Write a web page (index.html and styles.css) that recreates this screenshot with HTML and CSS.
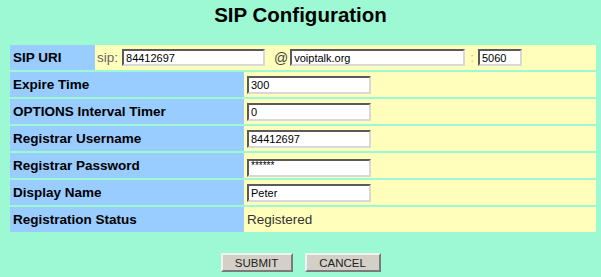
FILE: index.html
```html
<!DOCTYPE html>
<html lang="en">
<head>
    <meta charset="UTF-8">
    <title>SIP Configuration</title>
    <link rel="stylesheet" href="styles.css">
</head>
<body>
    <h1 class="title">SIP Configuration</h1>

    <form class="config" onsubmit="return false;">
        <table class="grid">
            <tr>
                <td colspan="2" class="uri-cell">
                    <div class="uri-row">
                        <span class="uri-label">SIP URI</span>
                        <div class="uri-value">
                            <span class="prefix">sip:</span>
                            <input class="field small uri-user" type="text" value="84412697">
                            <span class="at">@</span>
                            <input class="field small uri-host" type="text" value="voiptalk.org">
                            <span class="colon">:</span>
                            <input class="field small uri-port" type="text" value="5060">
                        </div>
                    </div>
                </td>
            </tr>
            <tr>
                <th>Expire Time</th>
                <td><input class="field" type="text" value="300"></td>
            </tr>
            <tr>
                <th>OPTIONS Interval Timer</th>
                <td><input class="field" type="text" value="0"></td>
            </tr>
            <tr>
                <th>Registrar Username</th>
                <td><input class="field" type="text" value="84412697"></td>
            </tr>
            <tr>
                <th>Registrar Password</th>
                <td><input class="field pw" type="text" value="******"></td>
            </tr>
            <tr>
                <th>Display Name</th>
                <td><input class="field" type="text" value="Peter"></td>
            </tr>
            <tr>
                <th>Registration Status</th>
                <td class="status">Registered</td>
            </tr>
        </table>

        <div class="actions">
            <button type="submit" class="btn">SUBMIT</button>
            <button type="button" class="btn">CANCEL</button>
        </div>
    </form>
</body>
</html>
```

FILE: styles.css
```css
body {
    margin: 0;
    background-color: #9cf9d4;
    font-family: "Liberation Sans", Arial, sans-serif;
    color: #000;
}
.title {
    margin: 0;
    padding-top: 3px;
    font-size: 20.5px;
    line-height: 24px;
    text-align: center;
    font-weight: bold;
}
.config {
    margin: 0;
}
.grid {
    width: 586px;
    margin: 16px 0 0 10px;
    border-collapse: separate;
    border-spacing: 0 2px;
}
.grid th,
.grid td {
    height: 25px;
    padding: 0;
    vertical-align: middle;
}
.grid th {
    width: 234px;
    padding-left: 3px;
    box-sizing: border-box;
    background-color: #99ccff;
    text-align: left;
    font-size: 13.5px;
    font-weight: bold;
}
.grid td {
    padding-left: 3px;
    background-color: #ffffbb;
}
.grid td.uri-cell {
    padding: 0;
}
.uri-row {
    display: flex;
    height: 25px;
}
.uri-label {
    width: 85px;
    padding-left: 3px;
    box-sizing: border-box;
    display: flex;
    align-items: center;
    background-color: #99ccff;
    font-size: 13.5px;
    font-weight: bold;
}
.uri-value {
    flex: 1;
    display: flex;
    align-items: center;
    padding-left: 2px;
    background-color: #ffffbb;
    font-size: 13.5px;
}
.prefix {
    color: #666;
    margin-right: 4px;
}
.at {
    color: #444;
    margin: 0 2px 0 9px;
    font-size: 14px;
}
.colon {
    color: #bbb;
    margin: 0 4px 0 5px;
}
.field {
    box-sizing: border-box;
    width: 124px;
    height: 18px;
    margin: 0;
    padding: 0 2px;
    border: 2px solid;
    border-color: #5a5a5a #d8d8d8 #d8d8d8 #5a5a5a;
    background-color: #fff;
    font-family: "Liberation Sans", Arial, sans-serif;
    font-size: 11px;
    color: #000;
}
.field.small {
    height: 17px;
}
.uri-user {
    width: 143px;
}
.uri-host {
    width: 175px;
}
.uri-port {
    width: 44px;
}
.pw {
    font-size: 10px;
    padding-bottom: 5px;
}
.status {
    font-size: 13.5px;
    color: #333;
}
.actions {
    display: flex;
    justify-content: center;
    gap: 12px;
    margin-top: 19px;
}
.btn {
    box-sizing: border-box;
    height: 19px;
    padding: 0;
    border: 2px solid;
    border-color: #f2f2f2 #7a7a7a #7a7a7a #f2f2f2;
    background-color: #d4d0c8;
    font-family: "Liberation Sans", Arial, sans-serif;
    font-size: 11.5px;
    color: #222;
    cursor: pointer;
}
.btn:first-child {
    width: 72px;
}
.btn:last-child {
    width: 76px;
}
```
